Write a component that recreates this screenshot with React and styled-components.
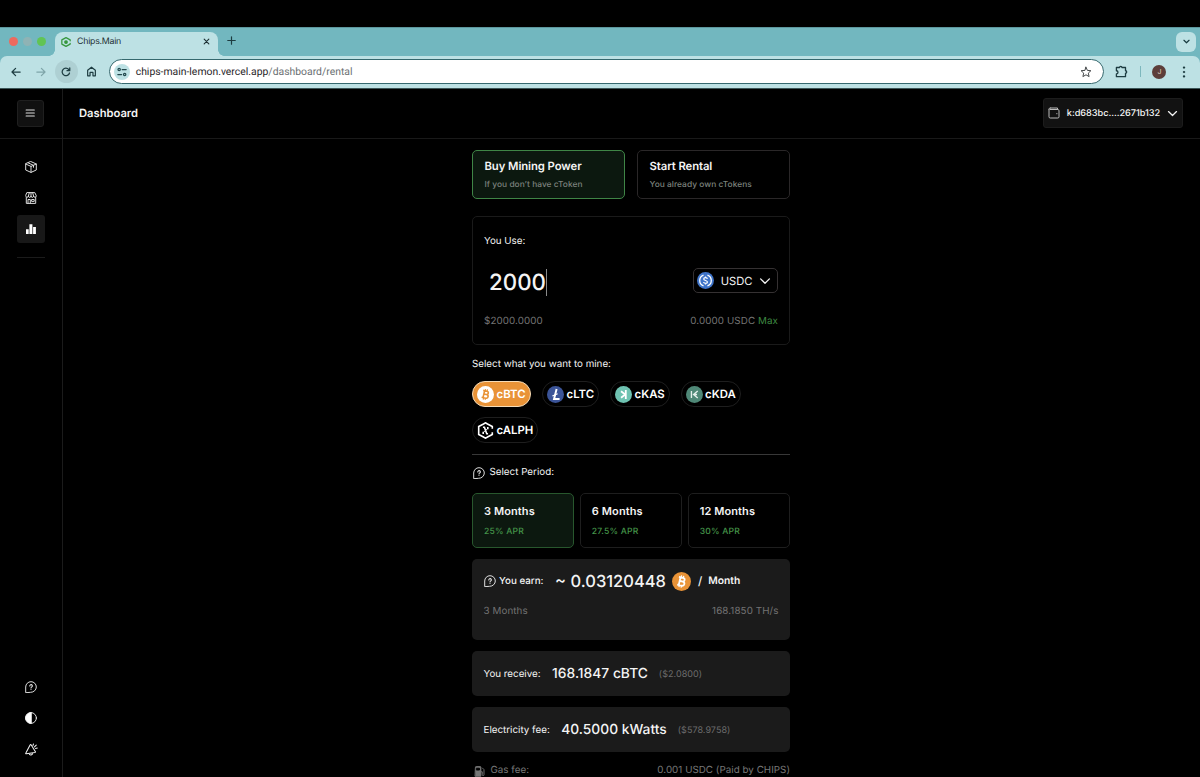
import React from 'react'
import styled, { createGlobalStyle, css } from 'styled-components'

const GlobalStyle = createGlobalStyle`
  * {
    box-sizing: border-box;
  }

  body {
    margin: 0;
    background: #000;
    color: #f4f4f4;
    font-family: Inter, "Liberation Sans", sans-serif;
    text-rendering: geometricPrecision;
    overflow: hidden;
  }

  svg {
    display: block;
    flex: none;
  }
`

/* ---------- browser window ---------- */

const Screen = styled.div`
  width: 1200px;
  height: 777px;
  padding-top: 27px;
  display: flex;
  flex-direction: column;
  overflow: hidden;
`

const TabStrip = styled.div`
  height: 28.5px;
  flex: none;
  display: flex;
  align-items: flex-end;
  background: #72b7bf;
  border-top: 1px solid #5d979d;
  padding-right: 4px;
`

const Lights = styled.div`
  width: 55px;
  height: 28px;
  display: flex;
  align-items: center;
  gap: 5px;
  padding-left: 9px;
`

const Light = styled.span`
  width: 9px;
  height: 9px;
  border-radius: 50%;
  background: ${({ color }) => color};
`

const Tab = styled.div`
  position: relative;
  width: 163px;
  height: 24px;
  display: flex;
  align-items: center;
  gap: 6px;
  padding: 0 8px 4px 6px;
  border-radius: 8px 8px 0 0;
  background: #bde1e4;
  color: #1d2f33;
  font-size: 8.8px;
  letter-spacing: -0.25px;

  &::before,
  &::after {
    content: '';
    position: absolute;
    bottom: 0;
    width: 6px;
    height: 6px;
  }

  &::before {
    left: -6px;
    background: radial-gradient(circle at 0 0, transparent 5.5px, #bde1e4 6px);
  }

  &::after {
    right: -6px;
    background: radial-gradient(circle at 100% 0, transparent 5.5px, #bde1e4 6px);
  }
`

const TabTitle = styled.span`
  flex: 1;
`

const NewTab = styled.div`
  height: 28px;
  flex: 1;
  display: flex;
  align-items: center;
  padding: 0 0 2px 9px;
`

const TabSearch = styled.div`
  width: 20px;
  height: 20px;
  margin-bottom: 4px;
  display: grid;
  place-items: center;
  border-radius: 6px;
  background: #bde1e4;
`

const ToolbarBack = styled.div`
  flex: none;
  background: #72b7bf;
`

const Toolbar = styled.div`
  height: 32.5px;
  display: flex;
  align-items: center;
  padding: 0 10px 0 4px;
  background: #bde1e4;
  border-radius: 7px 7px 0 0;
`

const NavButton = styled.div`
  width: 23px;
  height: 23px;
  margin-right: 2.3px;
  display: grid;
  place-items: center;
  border-radius: 50%;
  background: ${({ $hover }) => ($hover ? '#aed0d3' : 'transparent')};
`

const AddressBar = styled.div`
  width: 995px;
  height: 25px;
  flex: none;
  margin-left: 4px;
  display: flex;
  align-items: center;
  padding: 0 11px 0 4px;
  border: 1.5px solid #35686e;
  border-radius: 13px;
  background: #fff;
  color: #1f2427;
  font-family: Roboto, Inter, sans-serif;
  font-size: 10.4px;
`

const SiteInfo = styled.span`
  width: 16px;
  height: 16px;
  margin-right: 5.5px;
  display: grid;
  place-items: center;
  border-radius: 50%;
  background: #bde1e4;
`

const Url = styled.span`
  flex: 1;

  span {
    color: #6a6f72;
  }
`

const ToolbarEnd = styled.div`
  flex: 1;
  display: flex;
  align-items: center;
  justify-content: space-between;
  padding-left: 11px;
`

const Separator = styled.span`
  width: 1px;
  height: 11px;
  background: #7db7bd;
`

const Avatar = styled.span`
  width: 14px;
  height: 14px;
  display: grid;
  place-items: center;
  border-radius: 50%;
  background: #5c3e3a;
  color: #e0d4c0;
  font-size: 7px;
`

/* ---------- app shell ---------- */

const Shell = styled.div`
  flex: 1;
  min-height: 0;
  display: flex;
  background: #000;
  border-top: 1px solid #3b5557;
`

const Sidebar = styled.aside`
  width: 63px;
  flex: none;
  display: flex;
  flex-direction: column;
  border-right: 1px solid #1b1b1b;
`

const MenuArea = styled.div`
  height: 50px;
  padding: 11px 0 0 17px;
  border-bottom: 1px solid #191919;
`

const MenuButton = styled.div`
  width: 27px;
  height: 27px;
  display: grid;
  place-items: center;
  border: 1px solid #1f1f1f;
  border-radius: 3px;
  background: #111;
`

const SideNav = styled.nav`
  width: 28px;
  margin: 14px 0 0 17px;
  padding-bottom: 14px;
  display: flex;
  flex-direction: column;
  gap: 3px;
  border-bottom: 1px solid #1b1b1b;
`

const SideItem = styled.div`
  width: 28px;
  height: 28px;
  display: grid;
  place-items: center;
  border-radius: 3px;
  background: ${({ $active }) => ($active ? '#181818' : 'transparent')};
`

const SideBottom = styled.div`
  margin: auto 0 14px 17px;
  display: flex;
  flex-direction: column;
  gap: 3px;
`

const Main = styled.main`
  flex: 1;
  display: flex;
  flex-direction: column;
  align-items: center;
  min-width: 0;
`

const Header = styled.header`
  width: 100%;
  height: 50px;
  flex: none;
  display: flex;
  align-items: center;
  justify-content: space-between;
  padding: 0 17px 1px 16px;
  border-bottom: 1px solid #191919;
`

const Title = styled.h1`
  margin: 0;
  font-size: 11.2px;
  font-weight: 600;
`

const Wallet = styled.div`
  width: 140px;
  height: 30px;
  display: flex;
  align-items: center;
  justify-content: space-between;
  padding: 0 4px;
  border: 1px solid #1c1c1c;
  border-radius: 3px;
  background: #121212;
  font-size: 9.2px;
  font-weight: 500;
  letter-spacing: -0.04px;
`

/* ---------- rental form ---------- */

const Column = styled.div`
  width: 318px;
  flex: none;
  margin-right: 1px;
  padding-top: 11px;
  display: flex;
  flex-direction: column;
`

const Modes = styled.div`
  display: grid;
  grid-template-columns: 1fr 1fr;
  gap: 12px;
`

const activeCard = css`
  background: #0c180f;
  border-color: ${({ $strong }) => ($strong ? '#3f8546' : '#28572d')};
`

const Mode = styled.div`
  height: 49px;
  padding: 8px 11.5px;
  border: 1.5px solid #2a2728;
  border-radius: 5px;
  ${({ $active }) => $active && activeCard}
`

const ModeTitle = styled.div`
  font-size: 11.3px;
  font-weight: 600;
  line-height: 14px;
  letter-spacing: -0.08px;
`

const ModeNote = styled.div`
  margin-top: 6px;
  color: #7b807c;
  font-size: 8.4px;
  font-weight: 500;
  line-height: 13px;
  letter-spacing: 0.03px;
`

const UsePanel = styled.section`
  height: 129px;
  margin-top: 17px;
  padding: 18px 11px 0;
  border: 1px solid #1a1a1a;
  border-radius: 5px;
`

const Label = styled.div`
  font-size: 9.8px;
  line-height: 14px;
  white-space: nowrap;
`

const AmountRow = styled.div`
  height: 28px;
  margin-top: 19px;
  display: flex;
  align-items: center;
  justify-content: space-between;
`

const Amount = styled.div`
  display: flex;
  align-items: center;
  padding: 2px 0 0 5px;
  font-size: 22.3px;
  font-weight: 500;
  line-height: 28px;
`

const Caret = styled.span`
  width: 1px;
  height: 27px;
  margin-bottom: 2px;
  background: #8a8a8a;
`

const TokenSelect = styled.div`
  width: 85px;
  height: 25px;
  margin-bottom: 3px;
  display: flex;
  align-items: center;
  justify-content: space-between;
  padding: 0 6px 0 3px;
  border: 1.5px solid #353132;
  border-radius: 5px;
  font-size: 11.2px;
`

const Hints = styled.div`
  display: flex;
  justify-content: space-between;
  margin-top: ${({ $top }) => $top}px;
  color: #737373;
  font-size: 9.8px;
  line-height: 14px;
  letter-spacing: 0.1px;
`

const Max = styled.span`
  color: #3f8a43;
`

const MineLabel = styled(Label)`
  margin-top: 12px;
  padding-top: 1px;
`

const Coins = styled.div`
  margin-top: 9px;
  display: flex;
  flex-wrap: wrap;
  gap: 10px 11px;
`

const Coin = styled.div`
  height: 26px;
  width: ${({ $width }) => $width}px;
  display: flex;
  align-items: center;
  gap: 2.5px;
  padding-left: 4px;
  border: 1px solid ${({ $active }) => ($active ? '#f6dcb8' : '#1e1e1e')};
  border-radius: 13px;
  background: ${({ $active }) => ($active ? '#e99337' : 'transparent')};
  font-size: 11.4px;
  font-weight: 600;
  color: #fff;
`

const Divider = styled.hr`
  width: 100%;
  height: 1px;
  margin: 11px 0 0;
  border: 0;
  background: #383838;
`

const PeriodLabel = styled(Label)`
  height: 14px;
  display: flex;
  align-items: center;
  gap: 4.5px;
  margin: 11px 0 13px 1px;
`

const Periods = styled.div`
  display: grid;
  grid-template-columns: repeat(3, 1fr);
  gap: 5.5px;
`

const Period = styled.div`
  height: 55px;
  padding: 10px 11px;
  border: 1px solid #1e1e1e;
  border-radius: 5px;
  ${({ $active }) => $active && activeCard}
`

const PeriodName = styled.div`
  font-size: 11px;
  font-weight: 600;
  line-height: 15px;
  letter-spacing: 0.1px;
`

const Apr = styled.div`
  margin-top: 6px;
  color: #449449;
  font-size: 8.6px;
  font-weight: 500;
  line-height: 14px;
  letter-spacing: 0.2px;
`

const Box = styled.section`
  height: ${({ $height }) => $height}px;
  margin-top: 11px;
  padding: 0 11.5px;
  border-radius: 5px;
  background: #1b1b1b;
`

const BoxRow = styled.div`
  height: 44px;
  display: flex;
  align-items: center;
`

const RowLabel = styled(Label)`
  padding-top: 3px;
`

const Value = styled.div`
  margin-left: 11.5px;
  padding-top: 2px;
  font-size: 13.8px;
  font-weight: 500;
  white-space: nowrap;
`

const EarnValue = styled(Value)`
  padding-top: 0;
  font-size: 16.5px;
`

const Usd = styled.div`
  margin-left: 11px;
  padding-top: 2px;
  color: #6c6c6c;
  font-size: 9px;
  letter-spacing: 0.05px;
`

const EarnLabel = styled(Label)`
  margin-left: 3.5px;
  padding-top: 2px;
  font-weight: 500;
`

const EarnCoin = styled.span`
  margin: 0 7px 0 6px;
`

const Slash = styled.span`
  margin-right: 6px;
  font-size: 11.5px;
  font-weight: 500;
`

const Month = styled.span`
  font-size: 10.3px;
  font-weight: 600;
`

const GasRow = styled.div`
  display: flex;
  align-items: center;
  margin-top: 13px;
  padding-left: 2px;
  color: #777;
  font-size: 9.8px;
  line-height: 12px;
  letter-spacing: 0.03px;
`

const GasLabel = styled.span`
  flex: 1;
  margin-left: 5.5px;
`

/* ---------- icons ---------- */

const Icon = ({ size = 12, w = 1.2, color = 'currentColor', children }) => (
  <svg
    width={size}
    height={size}
    viewBox="0 0 12 12"
    fill="none"
    stroke={color}
    strokeWidth={w}
    strokeLinecap="round"
    strokeLinejoin="round"
  >
    {children}
  </svg>
)

const Chevron = ({ size = 12, color, w }) => (
  <Icon size={size} w={w} color={color}>
    <path d="M1.6 3.9 6 8.2l4.4-4.3" />
  </Icon>
)

const Help = ({ size = 12 }) => (
  <Icon size={size} w={0.9}>
    <path d="M.7 11.3V6A5.3 5.3 0 1 1 6 11.3Z" />
    <path d="M4.8 4.9a1.25 1.25 0 1 1 2 1c-.5.3-.8.6-.8 1.1M6 8.4v.1" strokeWidth="1.05" />
  </Icon>
)

const Bitcoin = ({ size, bg, fg }) => (
  <svg width={size} height={size} viewBox="0 0 20 20">
    <circle cx="10" cy="10" r="10" fill={bg} />
    <g transform="rotate(13 10 10)" fill="none" stroke={fg} strokeWidth="1.9">
      <path d="M6.3 5.9h4.5c2.7 0 2.7 3.9 0 3.9H8.1h3.1c3.1 0 3.1 4.4 0 4.4H6.3M8 5.9v8.3" />
      <path d="M8.7 3.7v2.4M11 3.7v2.4M8.7 14v2.4M11 14v2.4" strokeWidth="1.3" />
    </g>
  </svg>
)

const Litecoin = () => (
  <svg width="17" height="17" viewBox="0 0 20 20">
    <circle cx="10" cy="10" r="10" fill="#3b5498" />
    <path d="M11.3 3.6 8.3 15.2h6.5" fill="none" stroke="#fff" strokeWidth="2.3" />
    <path d="m6.3 11.7 6.2-2.6" stroke="#fff" strokeWidth="1.4" />
  </svg>
)

const Kaspa = () => (
  <svg width="17" height="17" viewBox="0 0 20 20">
    <circle cx="10" cy="10" r="10" fill="#6fc3b2" />
    <path d="M12.7 4.8v10.4M12 10 7.1 6.2M12 10l-4.9 3.8" fill="none" stroke="#fff" strokeWidth="2.1" />
  </svg>
)

const Kadena = () => (
  <svg width="17" height="17" viewBox="0 0 20 20">
    <circle cx="10" cy="10" r="10" fill="#4f8877" />
    <path d="M6.4 5.8v8.4M13.8 5.8 8.9 10l4.9 4.2M9 10h4" fill="none" stroke="#e4efeb" strokeWidth="1.6" />
  </svg>
)

const Alephium = () => (
  <svg width="17" height="17" viewBox="0 0 20 20" fill="none" stroke="#fff">
    <path d="M8.2 2 2 5.4v9.2L8.2 18M11.8 2 18 5.4v2.4M18 12.2v2.4L11.8 18M7.6 2.3 10 1l2.4 1.3M7.6 17.7 10 19l2.4-1.3" strokeWidth="1.9" />
    <path d="M7 6.2h1.7l2.8 7.6H13M12.7 5.8v2.7M7.3 11.5v2.7" strokeWidth="1.9" />
    <path d="m12.4 7.8-4.8 4.4" strokeWidth="1" />
  </svg>
)

const Usdc = () => (
  <svg width="17" height="17" viewBox="0 0 20 20" fill="none" stroke="#fff">
    <circle cx="10" cy="10" r="10" fill="#3f74c9" stroke="none" />
    <path d="M7.7 3.6a6.8 6.8 0 0 0 0 12.8M12.3 3.6a6.8 6.8 0 0 1 0 12.8" strokeWidth="1.5" />
    <path d="M12.2 8.1c-.2-1.9-4.3-1.8-4.3.1 0 2.2 4.4 1.3 4.4 3.6 0 2-4.4 2-4.6 0M10 5.3v1.5M10 13.2v1.5" strokeWidth="1.4" />
  </svg>
)

const coins = [
  { name: 'cBTC', width: 59, active: true, icon: <Bitcoin size={17} bg="#fff" fg="#e99337" /> },
  { name: 'cLTC', width: 57, icon: <Litecoin /> },
  { name: 'cKAS', width: 59.5, icon: <Kaspa /> },
  { name: 'cKDA', width: 60.5, icon: <Kadena /> },
  { name: 'cALPH', width: 66, icon: <Alephium /> },
]

const periods = [
  { name: '3 Months', apr: '25% APR', active: true },
  { name: '6 Months', apr: '27.5% APR' },
  { name: '12 Months', apr: '30% APR' },
]

const Browser = () => (
  <>
    <TabStrip>
      <Lights>
        <Light color="#ed6a5e" />
        <Light color="#8fb3b5" />
        <Light color="#61c454" />
      </Lights>
      <Tab>
        <Icon size={10} w={1.5} color="#36973d">
          <path d="M11 4.5v-1L6 .8 1 3.5v5l5 2.7 5-2.7v-1" />
          <circle cx="6" cy="6" r="1.5" fill="#36973d" />
        </Icon>
        <TabTitle>Chips.Main</TabTitle>
        <Icon size={7} w={1.9}><path d="m2 2 8 8M10 2l-8 8" /></Icon>
      </Tab>
      <NewTab>
        <Icon size={9} w={1.6} color="#1d3c41"><path d="M6 1v10M1 6h10" /></Icon>
      </NewTab>
      <TabSearch><Chevron size={7} w={2} color="#173a3f" /></TabSearch>
    </TabStrip>
    <ToolbarBack>
      <Toolbar>
        <NavButton>
          <Icon size={10} w={1.5} color="#1d3c41"><path d="M11 6H1.5M5.5 1.7 1.2 6l4.3 4.3" /></Icon>
        </NavButton>
        <NavButton>
          <Icon size={10} w={1.5} color="#7fa5a9"><path d="M1 6h9.5M6.5 1.7 10.8 6l-4.3 4.3" /></Icon>
        </NavButton>
        <NavButton $hover>
          <Icon size={10} w={1.5} color="#1d3c41">
            <path d="M10.2 7.2A4.5 4.5 0 1 1 9.3 3L10.4 4.3M10.5 1v3.4H7.2" />
          </Icon>
        </NavButton>
        <NavButton>
          <Icon size={11} w={1.3} color="#1d3c41">
            <path d="M1.8 4.7 6 1.3l4.2 3.4v6H7.6V7H4.4v3.7H1.8Z" />
          </Icon>
        </NavButton>
        <AddressBar>
          <SiteInfo>
            <Icon size={10} w={1.5} color="#23484d">
              <circle cx="2.6" cy="3" r="1.4" />
              <path d="M6.2 3H11M1 9h4.5" />
              <circle cx="9.2" cy="9" r="1.4" />
            </Icon>
          </SiteInfo>
          <Url>chips-main-lemon.vercel.app<span>/dashboard/rental</span></Url>
          <Icon size={12} w={1} color="#45494b">
            <path d="m6 1.2 1.4 3.2 3.5.3-2.6 2.4.8 3.5L6 8.8l-3.1 1.8.8-3.5L1.1 4.7l3.5-.3Z" />
          </Icon>
        </AddressBar>
        <ToolbarEnd>
          <Icon size={13} w={1.2} color="#1d3c41">
            <path d="M1.3 2.3h2.9a1.1 1.1 0 0 1 2.2 0h3.3v3a1.1 1.1 0 0 1 0 2.2v3.3H1.3V8.2a1.4 1.4 0 0 0 0-2.9Z" />
          </Icon>
          <Separator />
          <Avatar>J</Avatar>
          <Icon size={12} w={0.1} color="#1d3c41">
            <circle cx="6" cy="1.6" r="1.1" fill="#1d3c41" />
            <circle cx="6" cy="6" r="1.1" fill="#1d3c41" />
            <circle cx="6" cy="10.4" r="1.1" fill="#1d3c41" />
          </Icon>
        </ToolbarEnd>
      </Toolbar>
    </ToolbarBack>
  </>
)

const SideMenu = () => (
  <Sidebar>
    <MenuArea>
      <MenuButton>
        <Icon size={11} w={1.1} color="#ddd"><path d="M1.2 2.2h9M1.2 5.5h9M1.2 8.8h9" /></Icon>
      </MenuButton>
    </MenuArea>
    <SideNav>
      <SideItem>
        <Icon w={1} color="#ddd">
          <path d="M6 .6 11.3 3v6L6 11.4.7 9V3ZM.7 3 6 5.4 11.3 3M6 5.4v6M3.2 1.9l5.3 2.4v2" />
        </Icon>
      </SideItem>
      <SideItem>
        <Icon w={1} color="#ddd">
          <path d="M2.2.6h7.6l1.5 3.2c0 2-2.5 2-2.7.2-.1 1.9-2.5 1.9-2.6 0-.1 1.9-2.5 1.9-2.6 0C3.2 5.8.7 5.8.7 3.8ZM4.4.6 3.4 4M7.6.6l1 3.4M6 .6V4M1.3 5.5v5.9h9.4V5.5M3 11.3V7.5h2.3v3.8M7 7.5h2.2v1.9H7Z" />
        </Icon>
      </SideItem>
      <SideItem $active>
        <svg width="12" height="12" viewBox="0 0 12 12" fill="#fff">
          <path d="M1 6.2h2.7v4.8H1ZM4.4 1.2h3v9.8h-3ZM8.1 4h2.8v7H8.1Z" />
        </svg>
      </SideItem>
    </SideNav>
    <SideBottom>
      <SideItem><Help /></SideItem>
      <SideItem>
        <Icon w={0.9}>
          <circle cx="6" cy="6" r="5.4" />
          <path d="M6 .6a5.4 5.4 0 0 0 0 10.8Z" fill="#fff" />
        </Icon>
      </SideItem>
      <SideItem>
        <Icon size={13} w={0.95}>
          <path d="M5.6 1.7 9.5 7.9c.3.5 0 .8-.4.9L1.3 10c-.6.1-.8-.3-.5-.7l3.9-7.5c.3-.5.6-.5.9-.1ZM3.8 9.7c.4 2.1 3.4 1.7 3.2-.5M7.4 2.2 7.8.9M8.7 3.6l1.7-1.7M9.7 5l1.6-.3" />
        </Icon>
      </SideItem>
    </SideBottom>
  </Sidebar>
)

const RentalForm = () => (
  <Column>
    <Modes>
      <Mode $active $strong>
        <ModeTitle>Buy Mining Power</ModeTitle>
        <ModeNote>If you don’t have cToken</ModeNote>
      </Mode>
      <Mode>
        <ModeTitle>Start Rental</ModeTitle>
        <ModeNote>You already own cTokens</ModeNote>
      </Mode>
    </Modes>

    <UsePanel>
      <Label>You Use:</Label>
      <AmountRow>
        <Amount>2000<Caret /></Amount>
        <TokenSelect>
          <Usdc />
          USDC
          <Chevron w={1.3} />
        </TokenSelect>
      </AmountRow>
      <Hints $top={19}>
        <span>$2000.0000</span>
        <span>0.0000 USDC <Max>Max</Max></span>
      </Hints>
    </UsePanel>

    <MineLabel>Select what you want to mine:</MineLabel>
    <Coins>
      {coins.map((coin) => (
        <Coin key={coin.name} $width={coin.width} $active={coin.active}>
          {coin.icon}
          {coin.name}
        </Coin>
      ))}
    </Coins>
    <Divider />

    <PeriodLabel><Help />Select Period:</PeriodLabel>
    <Periods>
      {periods.map((period) => (
        <Period key={period.name} $active={period.active}>
          <PeriodName>{period.name}</PeriodName>
          <Apr>{period.apr}</Apr>
        </Period>
      ))}
    </Periods>

    <Box $height={81}>
      <BoxRow>
        <Help />
        <EarnLabel>You earn:</EarnLabel>
        <EarnValue>~ 0.03120448</EarnValue>
        <EarnCoin>
          <Bitcoin size={19} bg="#e99337" fg="#fff" />
        </EarnCoin>
        <Slash>/</Slash>
        <Month>Month</Month>
      </BoxRow>
      <Hints $top={2}>
        <span>3 Months</span>
        <span>168.1850 TH/s</span>
      </Hints>
    </Box>
    <Box $height={45}>
      <BoxRow>
        <RowLabel>You receive:</RowLabel>
        <Value>168.1847 cBTC</Value>
        <Usd>($2.0800)</Usd>
      </BoxRow>
    </Box>
    <Box $height={45}>
      <BoxRow>
        <RowLabel>Electricity fee:</RowLabel>
        <Value>40.5000 kWatts</Value>
        <Usd>($578.9758)</Usd>
      </BoxRow>
    </Box>
    <GasRow>
      <Icon size={11} w={1}>
        <path d="M1.5 1.5q0-1 1-1h4q1 0 1 1v9.7h-6Z" fill="currentColor" />
        <path d="M3 2.4h3v2H3Z" fill="#000" stroke="#000" />
        <path d="M8 6.3h1v3.2c0 1.3 1.9 1.3 1.9 0V4L9.3 2.3" />
      </Icon>
      <GasLabel>Gas fee:</GasLabel>
      <span>0.001 USDC (Paid by CHIPS)</span>
    </GasRow>
  </Column>
)

const App = () => {
  return (
    <Screen>
      <GlobalStyle />
      <Browser />
      <Shell>
        <SideMenu />
        <Main>
          <Header>
            <Title>Dashboard</Title>
            <Wallet>
              <Icon w={1} color="#bbb">
                <path d="M2.3 1h7.2v1.5M1 2.2C1 1.5 1.5 1 2.3 1M1 2.2v7.6q0 1.2 1.2 1.2h7.6q1.2 0 1.2-1.2V3.7q0-1.2-1.2-1.2H2.3M8.7 6.7h.3" />
              </Icon>
              k:d683bc....2671b132
              <Chevron size={11} w={1.4} />
            </Wallet>
          </Header>
          <RentalForm />
        </Main>
      </Shell>
    </Screen>
  )
}

export default App
